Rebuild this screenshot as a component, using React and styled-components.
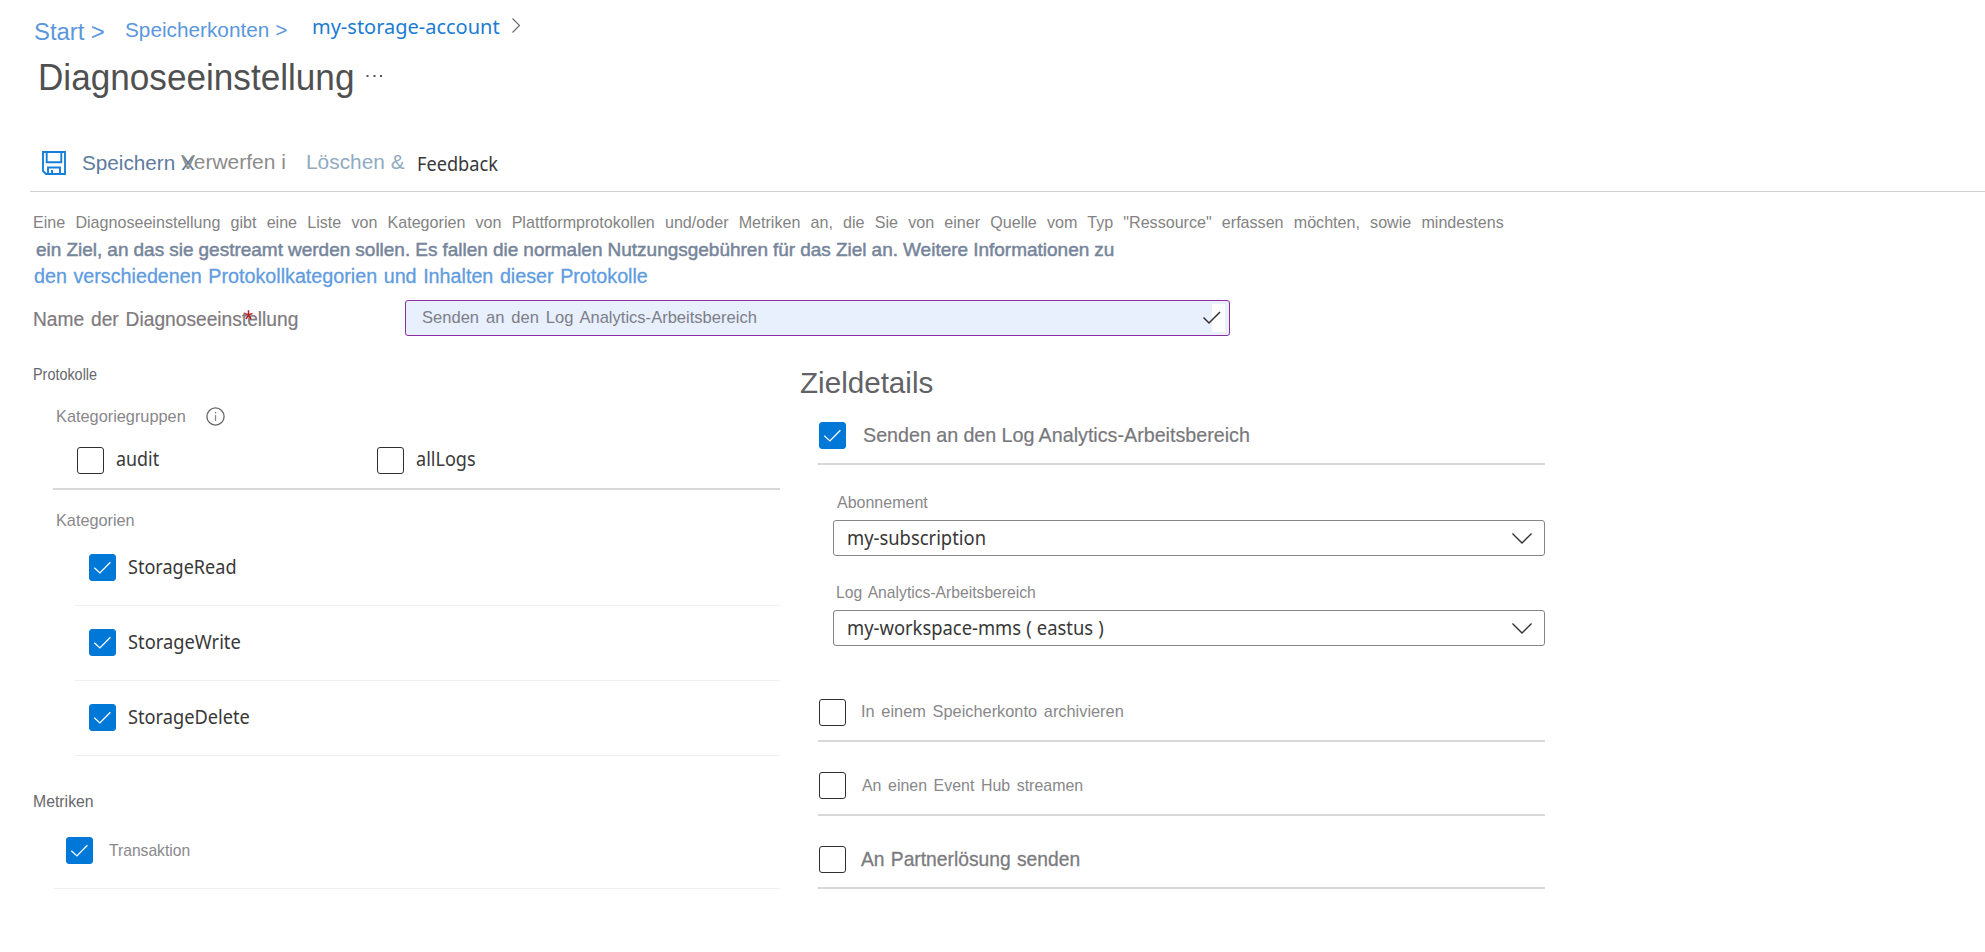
import React from 'react';
import styled, { createGlobalStyle } from 'styled-components';

const GlobalStyle = createGlobalStyle`
  body { margin: 0; background: #fff; }
  * { box-sizing: border-box; }
`;

const sans = '"Liberation Sans", Arial, sans-serif';
const ui = '"Noto Sans", "Segoe UI", sans-serif';

const Text = styled.span`
  display: block;
  flex: none;
  width: ${(p) => (p.$width ? `${p.$width}px` : 'max-content')};
  margin-top: ${(p) => p.$drop || 0}px;
  font-family: ${(p) => (p.$ui ? ui : sans)};
  font-size: ${(p) => p.$size || 17}px;
  line-height: ${(p) => p.$line || 24}px;
  color: ${(p) => p.$color || '#88888b'};
  word-spacing: ${(p) => p.$gap || 0}px;
  white-space: nowrap;
  transform: scaleX(${(p) => p.$fit || 1});
  transform-origin: 0 0;
  -webkit-text-stroke: ${(p) => p.$weight || 0}px currentColor;
`;

const Page = styled.main`
  width: 1985px;
  height: 952px;
  overflow: hidden;
  background: #fff;
`;

const Breadcrumb = styled.nav`
  display: flex;
  align-items: flex-start;
  height: 48px;
  padding: 14px 0 0 34px;
`;

const CrumbChevron = styled.svg`
  flex: none;
  margin-top: 4px;
`;

const TitleRow = styled.header`
  display: flex;
  align-items: flex-start;
  height: 92px;
  padding: 7.5px 0 0 38.4px;
`;

const More = styled.svg`
  flex: none;
  margin-top: 18.5px;
`;

const Toolbar = styled.div`
  display: flex;
  align-items: flex-start;
  height: 52px;
  margin-left: 30px;
  padding: 10px 0 0 12px;
  border-bottom: 1px solid #d2d2d2;
`;

const SaveIcon = styled.svg`
  flex: none;
  margin: 1px 16px 0 0;
`;

const Intro = styled.section`
  display: flex;
  flex-direction: column;
  height: 108px;
  padding: 19px 0 0 32.8px;
`;

const Line = styled.div`
  padding-left: ${(p) => p.$indent || 0}px;
  margin-bottom: ${(p) => p.$after || 0}px;
`;

const NameRow = styled.div`
  display: flex;
  height: 36px;
  padding-left: 33.4px;
`;

const NameLabel = styled.div`
  position: relative;
  flex: none;
  width: 371.6px;
`;

const Required = styled.svg`
  position: absolute;
  left: 211px;
  top: 10px;
`;

const NameInput = styled.div`
  display: flex;
  justify-content: space-between;
  width: 825px;
  height: 36px;
  padding: 3px 4px 3px 16px;
  border: 1px solid #8a2da5;
  border-radius: 3px;
  background: #e8effd;
`;

const Validity = styled.div`
  flex: none;
  width: 22px;
  height: 28px;
  padding-top: 7px;
  background: linear-gradient(to right, transparent 9px, #fff 9px);
  svg { display: block; }
`;

const Columns = styled.div`
  display: flex;
  align-items: flex-start;
`;

const LogsColumn = styled.section`
  flex: none;
  width: 779.5px;
  padding-top: 27px;
  margin-right: 20.5px;
`;

const SectionName = styled.div`
  height: 24px;
  padding-left: 33px;
`;

const SubHeading = styled.div`
  display: flex;
  height: ${(p) => p.$height || 24}px;
  margin-top: ${(p) => p.$before}px;
  padding-left: 56.1px;
`;

const InfoIcon = styled.svg`
  flex: none;
  margin: 3px 0 0 19.6px;
`;

const GroupRow = styled.div`
  display: grid;
  grid-template-columns: 300px 1fr;
  height: 62px;
  margin-left: 53px;
  padding: 19px 0 0 24px;
  border-bottom: 2px solid #d8d8d8;
`;

const Option = styled.div`
  display: flex;
  align-items: flex-start;
  gap: ${(p) => p.$gap || 12}px;
`;

const LogRow = styled(Option)`
  height: ${(p) => p.$height || 75}px;
  margin-left: ${(p) => p.$left || 75}px;
  padding: ${(p) => p.$top || 23}px 0 0 ${(p) => p.$inset || 14}px;
  border-bottom: 1px solid #efefef;
`;

const TargetColumn = styled.section`
  flex: none;
  width: 745px;
  padding-top: 26.6px;
`;

const TargetTitle = styled.div`
  height: 40.4px;
`;

const TargetRow = styled(Option)`
  height: ${(p) => p.$height || 62}px;
  margin-left: 18px;
  padding: ${(p) => p.$top || 19}px 0 0 1px;
  border-bottom: 2px solid #d8d8d8;
`;

const Field = styled.div`
  padding-top: ${(p) => p.$before}px;
  padding-left: 33px;
`;

const FieldLabel = styled.div`
  display: flex;
  height: 24px;
  margin-bottom: 6px;
  padding-left: ${(p) => p.$indent}px;
`;

const Select = styled.div`
  display: flex;
  justify-content: space-between;
  height: 36px;
  padding: 4px 12px 0 12.6px;
  border: 1px solid #85858a;
  border-radius: 3px;
  svg { flex: none; margin-top: 4px; }
`;

const Spacer = styled.div`
  height: ${(p) => p.$height}px;
`;

const Box = styled.span`
  flex: none;
  width: 27px;
  height: 27px;
  border: 1px solid ${(p) => (p.$on ? '#0078d7' : '#303030')};
  border-radius: 3px;
  background: ${(p) => (p.$on ? '#0078d7' : '#fff')};
  svg { display: block; margin: -1px; }
`;

function Checkbox({ on }) {
  return (
    <Box $on={on}>
      {on && (
        <svg width="27" height="27" viewBox="0 0 27 27" fill="none" stroke="#fff" strokeWidth="1.3">
          <path d="M5.3 13.7L10.9 18.9L21.4 8.2" />
        </svg>
      )}
    </Box>
  );
}

function Chevron() {
  return (
    <svg width="20" height="20" viewBox="0 0 20 20" fill="none" stroke="#303030" strokeWidth="1.4">
      <path d="M0.4 4.5L10 14L19.6 4.5" />
    </svg>
  );
}

const logs = [
  { name: 'StorageRead', fit: 0.95 },
  { name: 'StorageWrite', fit: 0.963 },
  { name: 'StorageDelete', fit: 0.959 },
];

export default function App() {
  return (
    <Page>
      <GlobalStyle />
      <Breadcrumb>
        <Text $size={23} $fit={1.038} $gap={-0.4} $drop={6} $width={91} $color="#5b97dc">Start &gt;</Text>
        <Text $size={21} $fit={0.989} $gap={0.2} $drop={3.5} $width={187} $color="#5b97dc">Speicherkonten &gt;</Text>
        <Text $ui $size={20} $fit={0.999} $drop={0.6} $width={199.6} $color="#1a7bd3">my-storage-account</Text>
        <CrumbChevron width="9" height="15" viewBox="0 0 9 15" fill="none" stroke="#666" strokeWidth="1.1">
          <path d="M0.5 0.5L7.5 7.5L0.5 14.5" />
        </CrumbChevron>
      </Breadcrumb>

      <TitleRow>
        <Text $size={36} $line={44} $fit={0.976} $width={327.6} $color="#505050">Diagnoseeinstellung</Text>
        <More width="18" height="4" fill="#555">
          <rect x="0.5" y="1" width="2" height="2" />
          <rect x="7.5" y="1" width="2" height="2" />
          <rect x="14" y="1" width="2" height="2" />
        </More>
      </TitleRow>

      <Toolbar>
        <SaveIcon width="24" height="24" viewBox="0 0 24 24" fill="none" stroke="#1580dc" strokeWidth="1.9">
          <path d="M1 1H23V23H4L1 20Z" />
          <path d="M4.7 1V11.3H19.3V1" />
          <path d="M6 23V16.5H18V23M10 19V23" />
        </SaveIcon>
        <Text $size={21} $fit={0.985} $drop={0.7} $width={99} $color="#5c7c9e">Speichern X</Text>
        <Text $size={20.5} $fit={1.023} $width={124.6} $color="#8c8c8c">Verwerfen i</Text>
        <Text $size={20.5} $fit={1.018} $width={111.8} $color="#90abc2">Löschen &amp;</Text>
        <Text $ui $size={19} $fit={0.956} $drop={1.6} $color="#383838">Feedback</Text>
      </Toolbar>

      <Intro>
        <Line $after={3.4}>
          <Text $fit={0.947} $gap={6} $color="#838383">
            Eine Diagnoseeinstellung gibt eine Liste von Kategorien von Plattformprotokollen und/oder Metriken an, die Sie von einer Quelle vom Typ "Ressource" erfassen möchten, sowie mindestens
          </Text>
        </Line>
        <Line $after={1.4} $indent={3}>
          <Text $size={19} $fit={0.999} $gap={-0.2} $weight={0.5} $color="#76859b">
            ein Ziel, an das sie gestreamt werden sollen. Es fallen die normalen Nutzungsgebühren für das Ziel an. Weitere Informationen zu
          </Text>
        </Line>
        <Line $indent={1}>
          <Text $size={20} $fit={0.986} $gap={1.1} $weight={0.3} $color="#5f9ce0">
            den verschiedenen Protokollkategorien und Inhalten dieser Protokolle
          </Text>
        </Line>
      </Intro>

      <NameRow>
        <NameLabel>
          <Text $size={20} $fit={0.959} $gap={1.6} $drop={7} $weight={0.2} $color="#7e7a7e">Name der Diagnoseeinstellung</Text>
          <Required width="9" height="10" viewBox="0 0 9 10" fill="none" stroke="#b0232b" strokeWidth="1.5">
            <path d="M4.5 0.3V5M0.5 3.4L4.5 5L8.5 3.4M2 9L4.5 5L7 9" />
          </Required>
        </NameLabel>
        <NameInput>
          <Text $drop={2} $fit={0.973} $gap={2.4} $color="#7c7e88">Senden an den Log Analytics-Arbeitsbereich</Text>
          <Validity>
            <svg width="18" height="14" viewBox="0 0 18 14" fill="none" stroke="#333" strokeWidth="1.5">
              <path d="M0.5 6.5L6 12L17 1" />
            </svg>
          </Validity>
        </NameInput>
      </NameRow>

      <Columns>
        <LogsColumn>
          <SectionName>
            <Text $size={16} $fit={0.9} $color="#68686c">Protokolle</Text>
          </SectionName>
          <SubHeading $before={17}>
            <Text $fit={0.96} $drop={1} $width={130.5}>Kategoriegruppen</Text>
            <InfoIcon width="19" height="19" viewBox="0 0 19 19" fill="none" stroke="#666" strokeWidth="1.3">
              <circle cx="9.5" cy="9.5" r="8.6" />
              <path d="M9.5 8V14M9.5 5V6.6" stroke="#888" />
            </InfoIcon>
          </SubHeading>
          <GroupRow>
            <Option>
              <Checkbox />
              <Text $ui $size={19} $fit={0.94} $color="#3a3a3a">audit</Text>
            </Option>
            <Option>
              <Checkbox />
              <Text $ui $size={19} $fit={0.95} $color="#3a3a3a">allLogs</Text>
            </Option>
          </GroupRow>
          <SubHeading $before={18} $height={23}>
            <Text $fit={0.956} $drop={1}>Kategorien</Text>
          </SubHeading>
          {logs.map((log) => (
            <LogRow key={log.name}>
              <Checkbox on />
              <Text $ui $size={19} $drop={1} $fit={log.fit} $color="#383838">{log.name}</Text>
            </LogRow>
          ))}
          <Spacer $height={34} />
          <SectionName>
            <Text $fit={0.93} $color="#68686c">Metriken</Text>
          </SectionName>
          <LogRow $left={53} $inset={13} $top={23} $gap={16.3}>
            <Checkbox on />
            <Text $fit={0.92} $drop={2}>Transaktion</Text>
          </LogRow>
        </LogsColumn>

        <TargetColumn>
          <TargetTitle>
            <Text $size={30} $line={40} $fit={0.987} $color="#626266">Zieldetails</Text>
          </TargetTitle>
          <TargetRow $gap={17}>
            <Checkbox on />
            <Text $size={21} $fit={0.938} $gap={-0.2} $drop={1} $weight={0.2} $color="#78787c">Senden an den Log Analytics-Arbeitsbereich</Text>
          </TargetRow>
          <Field $before={25}>
            <FieldLabel $indent={4}>
              <Text $fit={0.941} $drop={1}>Abonnement</Text>
            </FieldLabel>
            <Select>
              <Text $ui $size={19} $fit={0.967} $drop={0.6} $color="#383838">my-subscription</Text>
              <Chevron />
            </Select>
          </Field>
          <Field $before={24}>
            <FieldLabel $indent={2.8}>
              <Text $fit={0.922} $gap={2.2} $drop={1.2}>Log Analytics-Arbeitsbereich</Text>
            </FieldLabel>
            <Select>
              <Text $ui $size={19} $fit={0.967} $gap={0.34} $drop={1.3} $color="#383838">my-workspace-mms ( eastus )</Text>
              <Chevron />
            </Select>
          </Field>
          <Spacer $height={34} />
          <TargetRow $gap={15.3}>
            <Checkbox />
            <Text $fit={0.961} $gap={2.3} $drop={1}>In einem Speicherkonto archivieren</Text>
          </TargetRow>
          <TargetRow $gap={16} $height={74} $top={30}>
            <Checkbox />
            <Text $fit={0.937} $gap={2.3} $drop={2}>An einen Event Hub streamen</Text>
          </TargetRow>
          <TargetRow $gap={15.3} $height={73} $top={30}>
            <Checkbox />
            <Text $size={21} $fit={0.917} $gap={0.98} $drop={0.7} $weight={0.3} $color="#7b7b80">An Partnerlösung senden</Text>
          </TargetRow>
        </TargetColumn>
      </Columns>
    </Page>
  );
}
